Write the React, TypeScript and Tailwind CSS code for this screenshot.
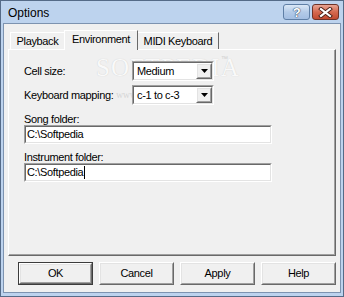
import React from "react";

const Sunken = ({ className = "", children }: { className?: string; children?: React.ReactNode }) => (
  <div className={`border border-t-[#a0a0a0] border-l-[#a0a0a0] border-r-white border-b-white ${className}`}>
    <div className="h-full w-full border border-t-[#696969] border-l-[#696969] border-r-[#e3e3e3] border-b-[#e3e3e3] bg-white">
      {children}
    </div>
  </div>
);

const Raised = ({ className = "", children }: { className?: string; children?: React.ReactNode }) => (
  <div className={`border border-t-white border-l-white border-r-[#696969] border-b-[#696969] ${className}`}>
    <div className="flex h-full w-full items-center justify-center border border-t-[#e3e3e3] border-l-[#e3e3e3] border-r-[#a0a0a0] border-b-[#a0a0a0] bg-[#f0f0f0]">
      {children}
    </div>
  </div>
);

const Combo = ({ value }: { value: string }) => (
  <Sunken className="h-[20px] w-[82px]">
    <div className="flex h-full items-stretch">
      <div className="flex-1 pl-[3px] leading-[16px]">{value}</div>
      <Raised className="w-[16px]">
        <svg width="7" height="4" viewBox="0 0 7 4">
          <path d="M0 0H7L3.5 4Z" fill="#000" />
        </svg>
      </Raised>
    </div>
  </Sunken>
);

const Button = ({ label, def = false }: { label: string; def?: boolean }) =>
  def ? (
    <div className="h-[23px] w-[75px] border border-[#3c3c3c]">
      <Raised className="h-full w-full">{label}</Raised>
    </div>
  ) : (
    <Raised className="h-[23px] w-[75px]">{label}</Raised>
  );

export default function App() {
  return (
    <div className="flex h-[297px] w-[344px] flex-col border border-[#556b88] bg-[#bdd3ee] font-['Liberation_Sans',Arial,sans-serif] text-[11px] tracking-[-0.35px] text-black">
      {/* Title bar */}
      <div className="flex h-[22px] shrink-0 items-start justify-between pl-[7px] pr-[4px]">
        <span className="mt-[5px] text-[12px] leading-[14px] tracking-normal">Options</span>
        <div className="mt-[3px] flex gap-[2px]">
          <div className="flex h-[16px] w-[27px] items-center justify-center rounded-[3px] border border-[#5f7fa6] bg-[linear-gradient(#dbe8f7,#b4cbe8_50%,#a3bee2)]">
            <span className="text-[13px] font-bold leading-[13px] text-white [text-shadow:0_0_1px_#39506e,0_0_1px_#39506e,0_0_1px_#39506e]">?</span>
          </div>
          <div className="flex h-[16px] w-[27px] items-center justify-center rounded-[3px] border border-[#6e3328] bg-[linear-gradient(#e8a493,#d5694f_50%,#c24a30)]">
            <svg width="15" height="11" viewBox="0 0 15 11">
              <path d="M3 2L12 9M12 2L3 9" stroke="#4a1e16" strokeWidth="4" strokeLinecap="square" />
              <path d="M3 2L12 9M12 2L3 9" stroke="#fff" strokeWidth="2.2" strokeLinecap="square" />
            </svg>
          </div>
        </div>
      </div>

      {/* Client */}
      <div className="mx-[2px] mb-[3px] flex flex-1 flex-col border border-[#7d93b0] bg-[#f0f0f0] px-[4px] pt-[6px]">
        {/* Tabs */}
        <div className="relative z-10 -mb-px ml-[2px] flex h-[20px] items-end">
          <div className="mb-px flex h-[17px] w-[55px] justify-center border-l border-t border-r border-l-white border-t-white border-r-[#696969] pt-[2px] leading-[13px]">
            Playback
          </div>
          <div className="-ml-[1px] flex h-[20px] w-[74px] justify-center border-l border-t border-r border-l-white border-t-white border-r-[#696969] bg-[#f0f0f0] pt-[2px] leading-[13px]">
            Environment
          </div>
          <div className="mb-px flex h-[17px] w-[81px] justify-center border-t border-r border-t-white border-r-[#696969] pt-[2px] leading-[13px]">
            MIDI Keyboard
          </div>
        </div>

        {/* Panel */}
        <div className="relative h-[207px] border border-t-white border-l-white border-r-[#696969] border-b-[#696969]">
          <div className="h-full border-r border-b border-r-[#a0a0a0] border-b-[#a0a0a0] pl-[15px] pt-[11px]">
            {/* watermark */}
            <div className="pointer-events-none absolute left-[87px] top-[4px] font-['Liberation_Serif',serif] text-[25px] leading-[28px] tracking-[1px] text-[#f9f9f9] [text-shadow:0_0_1px_#c8c8c8]">
              SOFTPEDIA
            </div>
            <div className="pointer-events-none absolute left-[212px] top-[5px] text-[7px] leading-[8px] text-[#cfcfcf]">™</div>
            <div className="pointer-events-none absolute left-[107px] top-[40px] font-['Liberation_Serif',serif] text-[10px] leading-[10px] text-[#d6d6d6]">
              www.softpedia.com
            </div>

            <div className="relative">
              <div className="flex h-[20px] items-center">
                <div className="w-[108px] leading-[13px]">Cell size:</div>
                <Combo value="Medium" />
              </div>
              <div className="mt-[4px] flex h-[20px] items-center">
                <div className="w-[108px] leading-[13px]">Keyboard mapping:</div>
                <Combo value="c-1 to c-3" />
              </div>
              <div className="mt-[8px] leading-[12px]">Song folder:</div>
              <Sunken className="h-[19px] w-[248px]">
                <div className="pl-[1px] pt-[1px] leading-[13px]">C:\Softpedia</div>
              </Sunken>
              <div className="mt-[7px] leading-[12px]">Instrument folder:</div>
              <Sunken className="h-[19px] w-[248px]">
                <div className="flex items-center pl-[1px] pt-[1px] leading-[13px]">
                  C:\Softpedia
                  <span className="ml-[1px] inline-block h-[13px] w-px bg-black" />
                </div>
              </Sunken>
            </div>
          </div>
        </div>

        {/* Buttons */}
        <div className="mt-[6px] flex justify-end gap-[6px]">
          <Button label="OK" def />
          <Button label="Cancel" />
          <Button label="Apply" />
          <Button label="Help" />
        </div>
      </div>
    </div>
  );
}
